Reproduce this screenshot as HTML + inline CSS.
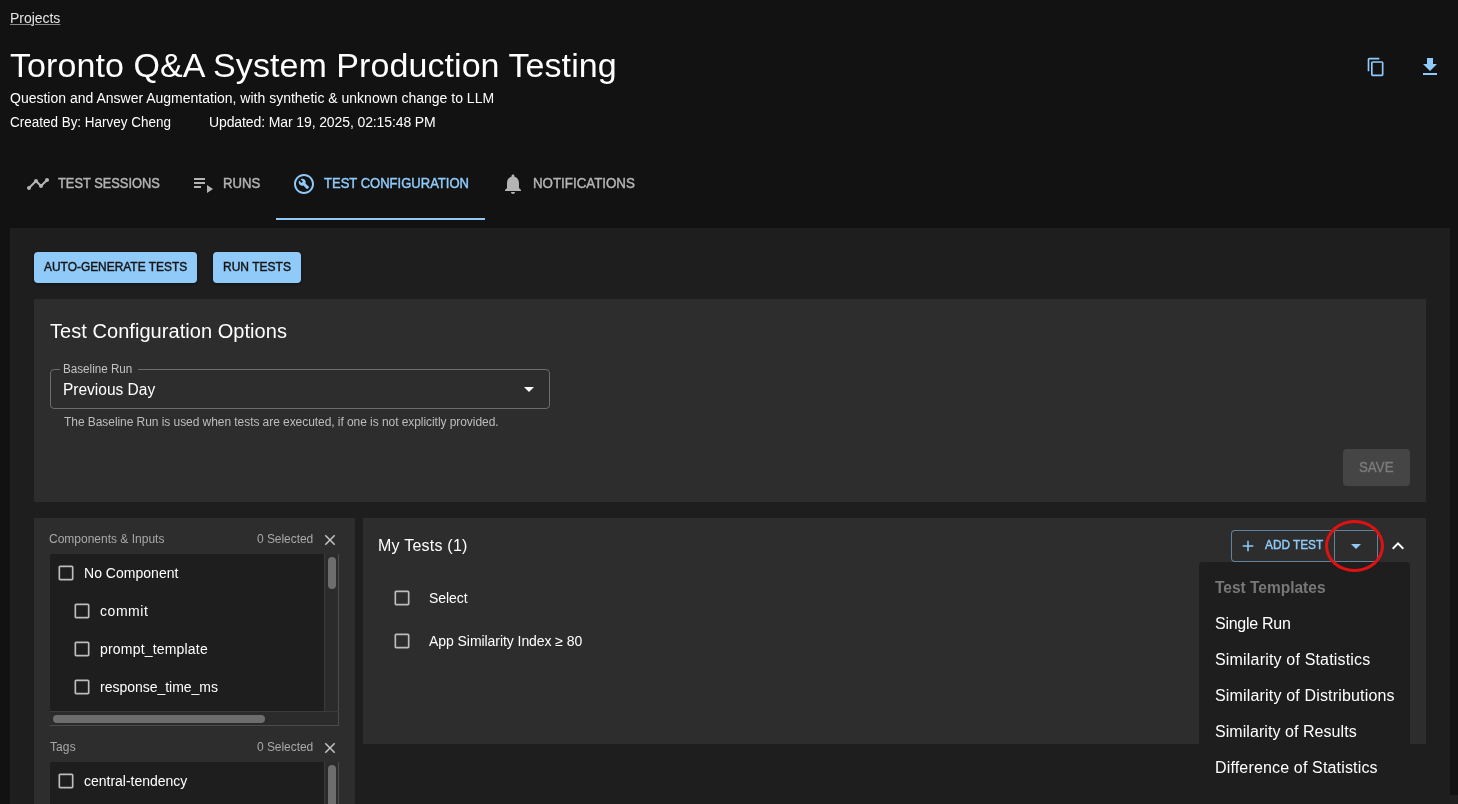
<!DOCTYPE html>
<html lang="en">
<head>
<meta charset="utf-8">
<title>Toronto Q&amp;A System Production Testing</title>
<style>
*{box-sizing:border-box;margin:0;padding:0}
html,body{width:1458px;height:804px;overflow:hidden;background:#121212}
body{position:relative;font-family:"Liberation Sans",Arial,sans-serif;color:#fff;-webkit-font-smoothing:antialiased}
div,a,h1,h2,h3,p,span,button,nav,main,section,header,ul,li,label,svg,fieldset,legend,i{position:absolute;display:block}
ul{list-style:none}
button{border:0;background:none;font:inherit;color:inherit}
.t{white-space:nowrap;line-height:1;font-weight:400}
.sx{transform-origin:0 50%}
svg{fill:currentColor}
.card{background:#2d2d2d;border-radius:0}
#app{left:0;top:0;width:1458px;height:804px;will-change:transform}
</style>
</head>
<body>
<div id="app">
 <header style="left:0px;top:0px;width:1458px;height:148px;">
  <a class="t" id="crumb" style="left:10px;top:11px;font-size:14px;color:#e6e6e6;letter-spacing:-0.03px;text-decoration:underline;text-decoration-thickness:1px;text-decoration-color:rgba(255,255,255,.5);text-underline-offset:1px;">Projects</a>
  <h1 class="t" id="title" style="left:10px;top:48px;font-size:34px;color:#fff;letter-spacing:0.07px;">Toronto Q&amp;A System Production Testing</h1>
  <p class="t" id="sub" style="left:10px;top:91px;font-size:14px;color:#fff;">Question and Answer Augmentation, with synthetic &amp; unknown change to LLM</p>
  <span class="t sx" id="by" style="left:10px;top:115px;font-size:14px;color:#fff;transform:scaleX(0.9620);">Created By: Harvey Cheng</span>
  <span class="t" id="upd" style="left:209px;top:115px;font-size:14px;color:#fff;letter-spacing:-0.11px;">Updated: Mar 19, 2025, 02:15:48 PM</span>
  <button aria-label="Copy" style="left:1358px;top:49px;width:36px;height:36px;">
   <svg viewBox="0 0 24 24" aria-hidden="true" style="left:8px;top:8px;width:20px;height:20px;color:#90caf9;"><path d="M16 1H4c-1.1 0-2 .9-2 2v14h2V3h12zm3 4H8c-1.1 0-2 .9-2 2v14c0 1.1.9 2 2 2h11c1.1 0 2-.9 2-2V7c0-1.1-.9-2-2-2m0 16H8V7h11z"/></svg>
  </button>
  <button aria-label="Download" style="left:1410px;top:47px;width:40px;height:40px;">
   <svg viewBox="0 0 24 24" aria-hidden="true" style="left:8px;top:8px;width:24px;height:24px;color:#90caf9;"><path d="M5 20h14v-2H5zM19 9h-4V3H9v6H5l7 7z"/></svg>
  </button>
 </header>
 <nav role="tablist" style="left:10px;top:148px;width:1440px;height:72px;">
  <button class="tab" role="tab" style="left:0px;top:0px;width:165.4px;height:72px;">
   <svg viewBox="0 0 24 24" aria-hidden="true" style="left:16px;top:24px;width:24px;height:24px;color:#b4b4b4;"><path d="M23 8c0 1.1-.9 2-2 2-.18 0-.35-.02-.51-.07l-3.56 3.55c.05.16.07.34.07.52 0 1.1-.9 2-2 2s-2-.9-2-2c0-.18.02-.36.07-.52l-2.55-2.55c-.16.05-.34.07-.52.07s-.36-.02-.52-.07l-4.55 4.56c.05.16.07.33.07.51 0 1.1-.9 2-2 2s-2-.9-2-2 .9-2 2-2c.18 0 .35.02.51.07l4.56-4.55C8.02 9.36 8 9.18 8 9c0-1.1.9-2 2-2s2 .9 2 2c0 .18-.02.36-.07.52l2.55 2.55c.16-.05.34-.07.52-.07s.36.02.52.07l3.55-3.56C19.02 8.35 19 8.18 19 8c0-1.1.9-2 2-2s2 .9 2 2"/></svg>
   <span class="t sx" id="tab1" style="left:48px;top:28px;font-size:14px;color:#b4b4b4;transform:scaleX(0.9176);-webkit-text-stroke:0.45px currentColor;">TEST SESSIONS</span>
  </button>
  <button class="tab" role="tab" style="left:165.4px;top:0px;width:100px;height:72px;">
   <svg viewBox="0 0 24 24" aria-hidden="true" style="left:16px;top:24px;width:24px;height:24px;color:#b4b4b4;"><path d="M3 10h11v2H3zm0-4h11v2H3zm0 8h7v2H3zm13-1v8l6-4z"/></svg>
   <span class="t sx" id="tab2" style="left:47.6px;top:28px;font-size:14px;color:#b4b4b4;transform:scaleX(0.9373);-webkit-text-stroke:0.45px currentColor;">RUNS</span>
  </button>
  <button class="tab" role="tab" aria-selected="true" style="left:265.4px;top:0px;width:209.6px;height:72px;">
   <svg viewBox="0 0 24 24" aria-hidden="true" style="left:17px;top:24px;width:24px;height:24px;color:#90caf9;"><path d="M12 2C6.48 2 2 6.48 2 12s4.48 10 10 10 10-4.48 10-10S17.52 2 12 2m0 18c-4.41 0-8-3.59-8-8s3.59-8 8-8 8 3.59 8 8-3.59 8-8 8M13.49 11.38c.43-1.22.17-2.64-.81-3.62-1.11-1.11-2.79-1.3-4.1-.59l2.35 2.35-1.41 1.41-2.35-2.35c-.71 1.32-.52 2.99.59 4.1.98.98 2.4 1.24 3.62.81l3.41 3.41c.2.2.51.2.71 0l1.4-1.4c.2-.2.2-.51 0-.71z"/></svg>
   <span class="t sx" id="tab3" style="left:48.6px;top:28px;font-size:14px;color:#90caf9;transform:scaleX(0.9305);-webkit-text-stroke:0.45px currentColor;">TEST CONFIGURATION</span>
  </button>
  <button class="tab" role="tab" style="left:475px;top:0px;width:165.4px;height:72px;">
   <svg viewBox="0 0 24 24" aria-hidden="true" style="left:16px;top:24px;width:24px;height:24px;color:#b4b4b4;"><path d="M12 22c1.1 0 2-.9 2-2h-4c0 1.1.89 2 2 2m6-6v-5c0-3.07-1.64-5.64-4.5-6.32V4c0-.83-.67-1.5-1.5-1.5s-1.5.67-1.5 1.5v.68C7.63 5.36 6 7.92 6 11v5l-2 2v1h16v-1z"/></svg>
   <span class="t sx" id="tab4" style="left:48px;top:28px;font-size:14px;color:#b4b4b4;transform:scaleX(0.9515);-webkit-text-stroke:0.45px currentColor;">NOTIFICATIONS</span>
  </button>
  <span style="left:266px;top:70px;width:209px;height:2px;background:#90caf9;"></span>
 </nav>
 <main style="left:10px;top:228px;width:1440px;height:576px;background:#1e1e1e;">
  <button style="left:24px;top:24px;width:163px;height:31px;background:#90caf9;border-radius:4px;box-shadow:0 1px 3px rgba(0,0,0,.4);">
   <span class="t sx" id="b1" style="left:10px;top:8px;font-size:13px;color:#141414;transform:scaleX(0.9174);-webkit-text-stroke:0.45px currentColor;">AUTO-GENERATE TESTS</span>
  </button>
  <button style="left:203px;top:24px;width:88px;height:31px;background:#90caf9;border-radius:4px;box-shadow:0 1px 3px rgba(0,0,0,.4);">
   <span class="t sx" id="b2" style="left:10px;top:8px;font-size:13px;color:#141414;transform:scaleX(0.9247);-webkit-text-stroke:0.45px currentColor;">RUN TESTS</span>
  </button>
  <section class="card" style="left:24px;top:71px;width:1392px;height:203px;">
   <h2 class="t" id="cfgh" style="left:16px;top:22px;font-size:20px;color:#fff;letter-spacing:0.05px;">Test Configuration Options</h2>
   <div style="left:16px;top:70px;width:500px;height:40px;border:1px solid #6c6c6c;border-radius:4px;"></div>
   <span style="left:25.5px;top:69px;width:78.5px;height:3px;background:#2d2d2d;"></span>
   <label class="t sx" id="lbl" style="left:29px;top:64px;font-size:12px;color:#c2c2c2;transform:scaleX(0.9714);">Baseline Run</label>
   <span class="t sx" id="val" style="left:29px;top:83px;font-size:16px;color:#fff;transform:scaleX(0.9685);">Previous Day</span>
   <svg viewBox="0 0 24 24" aria-hidden="true" style="left:483px;top:78px;width:24px;height:24px;color:#fff;"><path d="m7 10 5 5 5-5z"/></svg>
   <p class="t" id="help" style="left:30px;top:117px;font-size:12px;color:#bdbdbd;letter-spacing:-0.06px;">The Baseline Run is used when tests are executed, if one is not explicitly provided.</p>
   <button disabled style="left:1309px;top:150px;width:67px;height:37px;background:#454545;border-radius:4px;">
    <span class="t sx" id="save" style="left:16px;top:11px;font-size:14px;color:#7d7d7d;transform:scaleX(0.9503);-webkit-text-stroke:0.3px currentColor;">SAVE</span>
   </button>
  </section>
  <section class="card" style="left:24px;top:290px;width:321px;height:300px;">
   <span class="t" id="f1h" style="left:15px;top:15px;font-size:12px;color:#a8a8a8;">Components &amp; Inputs</span>
   <span class="t" id="f1s" style="left:223px;top:15px;font-size:12px;color:#a8a8a8;letter-spacing:-0.05px;">0 Selected</span>
   <svg viewBox="0 0 24 24" aria-hidden="true" style="left:287px;top:13px;width:18px;height:18px;color:#c4c4c4;"><path d="M19 6.41 17.59 5 12 10.59 6.41 5 5 6.41 10.59 12 5 17.59 6.41 19 12 13.41 17.59 19 19 17.59 13.41 12z"/></svg>
   <div style="left:16px;top:36px;width:289px;height:172px;background:#1e1e1e;overflow:hidden;">
    <ul style="left:0px;top:0px;width:274px;height:157px;">
     <li style="left:0px;top:0px;width:274px;height:38px;">
      <svg viewBox="0 0 24 24" aria-hidden="true" style="left:6px;top:9px;width:20px;height:20px;color:#bdbdbd;"><path d="M19 5v14H5V5zm0-2H5c-1.1 0-2 .9-2 2v14c0 1.1.9 2 2 2h14c1.1 0 2-.9 2-2V5c0-1.1-.9-2-2-2"/></svg>
      <span class="t" id="l1" style="left:34px;top:12px;font-size:14px;color:#fff;letter-spacing:0.02px;">No Component</span>
     </li>
     <li style="left:0px;top:38px;width:274px;height:38px;">
      <svg viewBox="0 0 24 24" aria-hidden="true" style="left:22px;top:9px;width:20px;height:20px;color:#bdbdbd;"><path d="M19 5v14H5V5zm0-2H5c-1.1 0-2 .9-2 2v14c0 1.1.9 2 2 2h14c1.1 0 2-.9 2-2V5c0-1.1-.9-2-2-2"/></svg>
      <span class="t" id="l2" style="left:50px;top:12px;font-size:14px;color:#fff;letter-spacing:0.55px;">commit</span>
     </li>
     <li style="left:0px;top:76px;width:274px;height:38px;">
      <svg viewBox="0 0 24 24" aria-hidden="true" style="left:22px;top:9px;width:20px;height:20px;color:#bdbdbd;"><path d="M19 5v14H5V5zm0-2H5c-1.1 0-2 .9-2 2v14c0 1.1.9 2 2 2h14c1.1 0 2-.9 2-2V5c0-1.1-.9-2-2-2"/></svg>
      <span class="t" id="l3" style="left:50px;top:12px;font-size:14px;color:#fff;letter-spacing:0.19px;">prompt_template</span>
     </li>
     <li style="left:0px;top:114px;width:274px;height:38px;">
      <svg viewBox="0 0 24 24" aria-hidden="true" style="left:22px;top:9px;width:20px;height:20px;color:#bdbdbd;"><path d="M19 5v14H5V5zm0-2H5c-1.1 0-2 .9-2 2v14c0 1.1.9 2 2 2h14c1.1 0 2-.9 2-2V5c0-1.1-.9-2-2-2"/></svg>
      <span class="t" id="l4" style="left:50px;top:12px;font-size:14px;color:#fff;letter-spacing:-0.02px;">response_time_ms</span>
     </li>
    </ul>
    <div style="left:274px;top:0px;width:15px;height:172px;background:#2b2b2b;box-shadow:inset 1px 0 #3b3b3b,inset -1px 0 #4c4c4c;">
     <span style="left:4px;top:3px;width:8px;height:32px;background:#6d6d6d;border-radius:4px;"></span>
    </div>
    <div style="left:0px;top:157px;width:289px;height:15px;background:#2b2b2b;box-shadow:inset 0 1px #3b3b3b,inset 0 -1px #4c4c4c,inset -1px 0 #4c4c4c;">
     <span style="left:3px;top:4px;width:212px;height:8px;background:#6d6d6d;border-radius:4px;"></span>
    </div>
   </div>
   <span class="t" id="f2h" style="left:16px;top:223px;font-size:12px;color:#a8a8a8;letter-spacing:0.1px;">Tags</span>
   <span class="t" id="f2s" style="left:223px;top:223px;font-size:12px;color:#a8a8a8;letter-spacing:-0.05px;">0 Selected</span>
   <svg viewBox="0 0 24 24" aria-hidden="true" style="left:287px;top:221px;width:18px;height:18px;color:#c4c4c4;"><path d="M19 6.41 17.59 5 12 10.59 6.41 5 5 6.41 10.59 12 5 17.59 6.41 19 12 13.41 17.59 19 19 17.59 13.41 12z"/></svg>
   <div style="left:16px;top:244px;width:289px;height:60px;background:#1e1e1e;overflow:hidden;">
    <ul style="left:0px;top:0px;width:274px;height:60px;">
     <li style="left:0px;top:0px;width:274px;height:38px;">
      <svg viewBox="0 0 24 24" aria-hidden="true" style="left:6px;top:9px;width:20px;height:20px;color:#bdbdbd;"><path d="M19 5v14H5V5zm0-2H5c-1.1 0-2 .9-2 2v14c0 1.1.9 2 2 2h14c1.1 0 2-.9 2-2V5c0-1.1-.9-2-2-2"/></svg>
      <span class="t" id="l5" style="left:34px;top:12px;font-size:14px;color:#fff;letter-spacing:-0.02px;">central-tendency</span>
     </li>
    </ul>
    <div style="left:274px;top:0px;width:15px;height:60px;background:#2b2b2b;box-shadow:inset 1px 0 #3b3b3b,inset -1px 0 #4c4c4c;">
     <span style="left:4px;top:3px;width:8px;height:60px;background:#6d6d6d;border-radius:4px;"></span>
    </div>
   </div>
  </section>
  <section class="card" style="left:353px;top:290px;width:1063px;height:226px;">
   <h3 class="t" id="mth" style="left:15px;top:20px;font-size:16px;color:#fff;letter-spacing:0.23px;">My Tests (1)</h3>
   <svg viewBox="0 0 24 24" aria-hidden="true" style="left:29px;top:70px;width:20px;height:20px;color:#bdbdbd;"><path d="M19 5v14H5V5zm0-2H5c-1.1 0-2 .9-2 2v14c0 1.1.9 2 2 2h14c1.1 0 2-.9 2-2V5c0-1.1-.9-2-2-2"/></svg>
   <span class="t" id="sel" style="left:66px;top:73px;font-size:14px;color:#fff;letter-spacing:-0.05px;">Select</span>
   <svg viewBox="0 0 24 24" aria-hidden="true" style="left:29px;top:113px;width:20px;height:20px;color:#bdbdbd;"><path d="M19 5v14H5V5zm0-2H5c-1.1 0-2 .9-2 2v14c0 1.1.9 2 2 2h14c1.1 0 2-.9 2-2V5c0-1.1-.9-2-2-2"/></svg>
   <span class="t" id="asi" style="left:66px;top:116px;font-size:14px;color:#fff;letter-spacing:-0.06px;">App Similarity Index ≥ 80</span>
   <div role="group" style="left:868px;top:12px;width:147px;height:32px;box-shadow:inset 0 0 0 1px rgba(144,202,249,.55);border-radius:4px;">
    <span style="left:103px;top:1px;width:1px;height:30px;background:rgba(144,202,249,.55);"></span>
   </div>
   <svg viewBox="0 0 24 24" aria-hidden="true" style="left:876px;top:19.3px;width:18px;height:18px;color:#90caf9;"><path d="M19 13h-6v6h-2v-6H5v-2h6V5h2v6h6z"/></svg>
   <span class="t sx" id="addt" style="left:902px;top:20px;font-size:13px;color:#90caf9;transform:scaleX(0.9091);-webkit-text-stroke:0.45px currentColor;">ADD TEST</span>
   <svg viewBox="0 0 24 24" aria-hidden="true" style="left:981px;top:16px;width:24px;height:24px;color:#90caf9;"><path d="m7 10 5 5 5-5z"/></svg>
   <svg viewBox="0 0 24 24" aria-hidden="true" style="left:1023px;top:16px;width:24px;height:24px;color:#fff;"><path d="m12 8-6 6 1.41 1.41L12 10.83l4.59 4.58L18 14z"/></svg>
  </section>
 </main>
 <ul role="menu" style="left:1199px;top:562px;width:211px;height:232px;background:#1e1e1e;border-radius:4px;">
  <li class="t sx" id="mh" style="left:16px;top:18px;font-size:16px;color:#787878;font-weight:700;transform:scaleX(0.9685);">Test Templates</li>
  <li class="t mi" id="m0" style="left:16px;top:54px;font-size:16px;color:#fff;letter-spacing:-0.27px;">Single Run</li>
  <li class="t mi" id="m1" style="left:16px;top:90px;font-size:16px;color:#fff;letter-spacing:0.18px;">Similarity of Statistics</li>
  <li class="t mi" id="m2" style="left:16px;top:126px;font-size:16px;color:#fff;letter-spacing:0.17px;">Similarity of Distributions</li>
  <li class="t mi" id="m3" style="left:16px;top:162px;font-size:16px;color:#fff;letter-spacing:0.06px;">Similarity of Results</li>
  <li class="t mi" id="m4" style="left:16px;top:198px;font-size:16px;color:#fff;letter-spacing:0.16px;">Difference of Statistics</li>
 </ul>
 <div style="left:1450px;top:795px;width:8px;height:9px;background:#1f1f1f;"></div>
 <div id="ring" style="left:1325.3px;top:519.7px;width:58.7px;height:51.9px;border:3.3px solid #de1212;border-radius:50%;"></div>
</div>
</body>
</html>
